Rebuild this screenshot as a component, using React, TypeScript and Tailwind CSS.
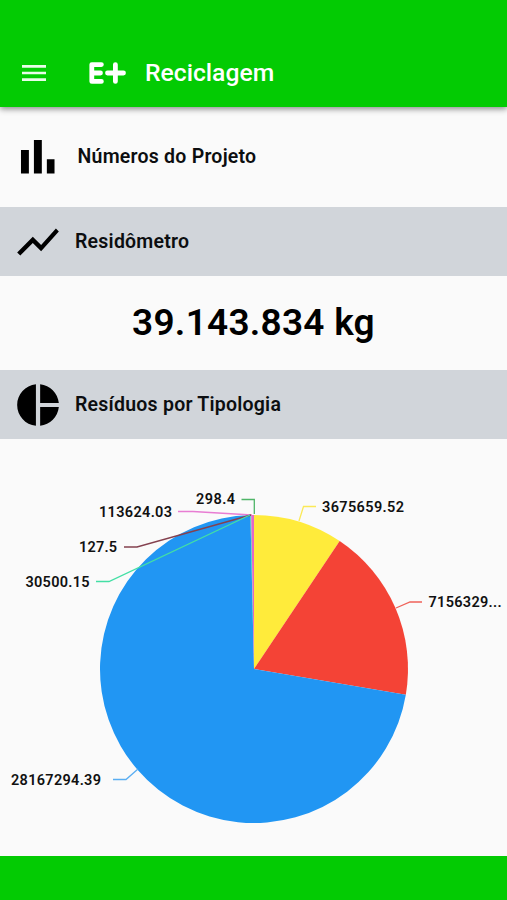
import type { ReactNode } from "react";

const CX = 254;
const CY = 230;
const R = 154;

const slices = [
  { value: 3675659.52, color: "#ffeb3b" },
  { value: 7156329.5, color: "#f44336" },
  { value: 28167294.39, color: "#2196f3" },
  { value: 30500.15, color: "#35dc9c" },
  { value: 127.5, color: "#7b2d3f" },
  { value: 113624.03, color: "#e667c8" },
  { value: 298.4, color: "#4caf50" },
];

const labels = [
  { text: "298.4", x: 196, y: 65, width: 39, color: "#4fb568", line: "241.5,60.5 254.3,60.5 254.3,75" },
  { text: "3675659.52", x: 322, y: 73, width: 82, color: "#fbe957", line: "316,67.5 303.5,67.5 299,82" },
  { text: "113624.03", x: 99, y: 78, width: 73, color: "#e87dd3", line: "178,72.5 193,72.5 252,76" },
  { text: "127.5", x: 79, y: 113, width: 38, color: "#84414f", line: "124,108 137,108 251,76" },
  { text: "30500.15", x: 25.5, y: 147.5, width: 64, color: "#43dfa5", line: "96,142.5 109,142.5 250,76" },
  { text: "7156329...", x: 428.5, y: 168, width: 73, color: "#ef6259", line: "422,163 410,163 396,169" },
  { text: "28167294.39", x: 11, y: 346, width: 90, color: "#5aaef2", line: "113,340.5 126,340.5 138,330" },
];

function point(angle: number) {
  return `${CX + R * Math.sin(angle)} ${CY - R * Math.cos(angle)}`;
}

function PieChart() {
  const total = slices.reduce((sum, s) => sum + s.value, 0);
  let start = 0;

  return (
    <svg width="507" height="417" viewBox="0 0 507 417" className="block">
      {slices.map((s) => {
        const end = start + (s.value / total) * Math.PI * 2;
        const large = end - start > Math.PI ? 1 : 0;
        const d = `M${CX} ${CY}L${point(start)}A${R} ${R} 0 ${large} 1 ${point(end)}Z`;
        start = end;
        return <path key={s.value} d={d} fill={s.color} />;
      })}
      {labels.map((l) => (
        <g key={l.text}>
          <polyline points={l.line} fill="none" stroke={l.color} strokeWidth="1.3" />
          <text
            x={l.x}
            y={l.y}
            textLength={l.width}
            className="fill-[#111] text-[14.5px] font-semibold"
          >
            {l.text}
          </text>
        </g>
      ))}
    </svg>
  );
}

function SectionBar({ title, icon }: { title: string; icon: string }) {
  return (
    <div className="flex h-[69px] shrink-0 items-center bg-[#d1d5da] pl-[13px]">
      <svg viewBox="0 0 24 24" className="size-[50px] fill-black">
        <path d={icon} />
      </svg>
      <Heading>{title}</Heading>
    </div>
  );
}

function Heading({ children }: { children: ReactNode }) {
  return (
    <h2 className="ml-3 text-[19.5px] font-semibold tracking-[0.23px] text-[#0c0e10]">{children}</h2>
  );
}

export default function App() {
  return (
    <main className="flex h-[900px] w-[507px] flex-col overflow-hidden bg-[#fafafa] font-[Roboto,sans-serif]">
      <header className="relative flex h-[107px] shrink-0 items-center bg-[#03cb03] pt-[38px] pl-[18px] text-white shadow-[0_2px_6px_rgba(0,0,0,0.45)]">
        <svg viewBox="0 0 24 24" className="size-8 fill-[#e9fde9]">
          <path d="M3 18h18v-2H3v2zm0-5h18v-2H3v2zm0-7v2h18V6H3z" />
        </svg>
        <svg
          viewBox="0 0 40 24"
          className="ml-[38px] h-6 w-10 fill-none stroke-white stroke-[4.8]"
          strokeLinecap="round"
          strokeLinejoin="round"
        >
          <path d="M13.4 3.6H3.8v16.8h9.6M4 12h8.5M19.5 12h16M27.4 3.6v16.8" />
        </svg>
        <h1 className="ml-[17px] pt-px text-[24.7px] font-medium">Reciclagem</h1>
      </header>

      <div className="flex h-[100px] shrink-0 items-center pl-[9px]">
        <svg viewBox="0 0 24 24" className="-mr-px size-[57.5px] fill-black">
          <path d="M5 9.2h3.3V19H5zM10.4 5h3.3v14h-3.3zM15.8 13H19v6h-3.2z" />
        </svg>
        <Heading>Números do Projeto</Heading>
      </div>

      <SectionBar
        title="Residômetro"
        icon="M3.5 18.49l6-6.01 4 4L22 6.92l-1.41-1.41-7.09 7.97-4-4L2 16.99z"
      />
      <p className="flex h-[94px] shrink-0 items-center justify-center text-[37px] font-semibold tracking-[0.25px] text-black">
        39.143.834 kg
      </p>
      <SectionBar
        title="Resíduos por Tipologia"
        icon="M11 2v20c-5.07-.5-9-4.79-9-10s3.93-9.5 9-10zm2.03 0v8.99H22c-.47-4.74-4.24-8.52-8.97-8.99zm0 11.01V22c4.74-.47 8.5-4.25 8.97-8.99h-8.97z"
      />

      <PieChart />
      <footer className="h-11 shrink-0 bg-[#03cb03]" />
    </main>
  );
}
